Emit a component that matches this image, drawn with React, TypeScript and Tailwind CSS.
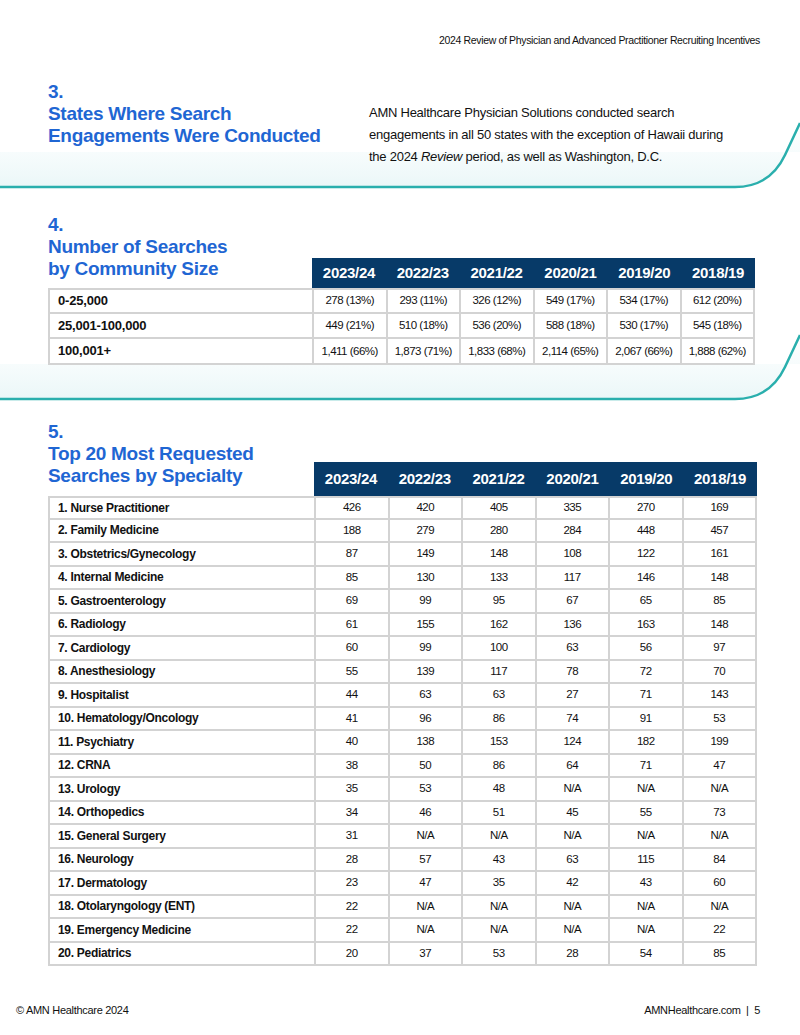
const years = ["2023/24", "2022/23", "2021/22", "2020/21", "2019/20", "2018/19"]

const communityRows = [
  { label: "0-25,000", values: ["278 (13%)", "293 (11%)", "326 (12%)", "549 (17%)", "534 (17%)", "612 (20%)"] },
  { label: "25,001-100,000", values: ["449 (21%)", "510 (18%)", "536 (20%)", "588 (18%)", "530 (17%)", "545 (18%)"] },
  { label: "100,001+", values: ["1,411 (66%)", "1,873 (71%)", "1,833 (68%)", "2,114 (65%)", "2,067 (66%)", "1,888 (62%)"] },
]

const specialtyRows = [
  { label: "1. Nurse Practitioner", values: ["426", "420", "405", "335", "270", "169"] },
  { label: "2. Family Medicine", values: ["188", "279", "280", "284", "448", "457"] },
  { label: "3. Obstetrics/Gynecology", values: ["87", "149", "148", "108", "122", "161"] },
  { label: "4. Internal Medicine", values: ["85", "130", "133", "117", "146", "148"] },
  { label: "5. Gastroenterology", values: ["69", "99", "95", "67", "65", "85"] },
  { label: "6. Radiology", values: ["61", "155", "162", "136", "163", "148"] },
  { label: "7. Cardiology", values: ["60", "99", "100", "63", "56", "97"] },
  { label: "8. Anesthesiology", values: ["55", "139", "117", "78", "72", "70"] },
  { label: "9. Hospitalist", values: ["44", "63", "63", "27", "71", "143"] },
  { label: "10. Hematology/Oncology", values: ["41", "96", "86", "74", "91", "53"] },
  { label: "11. Psychiatry", values: ["40", "138", "153", "124", "182", "199"] },
  { label: "12. CRNA", values: ["38", "50", "86", "64", "71", "47"] },
  { label: "13. Urology", values: ["35", "53", "48", "N/A", "N/A", "N/A"] },
  { label: "14. Orthopedics", values: ["34", "46", "51", "45", "55", "73"] },
  { label: "15. General Surgery", values: ["31", "N/A", "N/A", "N/A", "N/A", "N/A"] },
  { label: "16. Neurology", values: ["28", "57", "43", "63", "115", "84"] },
  { label: "17. Dermatology", values: ["23", "47", "35", "42", "43", "60"] },
  { label: "18. Otolaryngology (ENT)", values: ["22", "N/A", "N/A", "N/A", "N/A", "N/A"] },
  { label: "19. Emergency Medicine", values: ["22", "N/A", "N/A", "N/A", "N/A", "22"] },
  { label: "20. Pediatrics", values: ["20", "37", "53", "28", "54", "85"] },
]

// teal rule that sweeps up at the right edge
function Wave({ id, className }: { id: string; className: string }) {
  return (
    <svg className={className} width="800" height="110" viewBox="0 0 800 110" fill="none">
      <defs>
        <linearGradient id={id} x1="0" y1="0" x2="0" y2="1">
          <stop offset="0" stopColor="#eef9fa" stopOpacity="0" />
          <stop offset="1" stopColor="#e8f6f7" stopOpacity="0.9" />
        </linearGradient>
      </defs>
      <path d="M0 62 H800 V33 L785 65 Q770 97 735 97 H0 Z" fill={`url(#${id})`} />
      <path d="M0 97 H735 Q770 97 785 65 L800 33" stroke="#2aafad" strokeWidth="2.5" />
    </svg>
  )
}

function SectionTitle({ num, lines }: { num: string; lines: string[] }) {
  return (
    <h2 className="text-[19px] leading-[22px] font-bold tracking-[-0.3px] text-[#1f66d3]">
      <span className="block">{num}</span>
      {lines.map((l) => (
        <span key={l} className="block">{l}</span>
      ))}
    </h2>
  )
}

export default function App() {
  return (
    <div className="relative w-[800px] h-[1035px] overflow-hidden bg-white text-[#111] font-['Liberation_Sans',Arial,sans-serif]">
      <Wave id="g1" className="absolute left-0 top-[90px]" />
      <Wave id="g2" className="absolute left-0 top-[302px]" />

      <div className="relative flex flex-col h-full">
        <p className="pt-[33px] pr-[40px] text-right text-[10.5px] leading-[14px] tracking-[-0.35px]">
          2024 Review of Physician and Advanced Practitioner Recruiting Incentives
        </p>

        {/* 3 */}
        <section className="mt-[34px] flex items-start pl-[48px]">
          <div className="w-[321px]">
            <SectionTitle num="3." lines={["States Where Search", "Engagements Were Conducted"]} />
          </div>
          <p className="mt-[21px] w-[400px] text-[13px] leading-[22px] tracking-[-0.25px]">
            AMN Healthcare Physician Solutions conducted search
            <br />
            engagements in all 50 states with the exception of Hawaii during
            <br />
            the 2024 <i>Review</i> period, as well as Washington, D.C.
          </p>
        </section>

        {/* 4 */}
        <section className="mt-[46px] ml-[48px] w-[707px]">
          <div className="flex items-end">
            <div className="w-[264px] pb-[8px]">
              <SectionTitle num="4." lines={["Number of Searches", "by Community Size"]} />
            </div>
            <div className="flex-1 grid grid-cols-6 h-[30px] bg-[#073a68] text-white text-[15px] font-bold tracking-[-0.3px]">
              {years.map((y) => (
                <div key={y} className="flex items-center justify-center">{y}</div>
              ))}
            </div>
          </div>
          <div className="border-l-2 border-[#d3d3d3]">
            {communityRows.map((r, i) => (
              <div
                key={r.label}
                className={`grid grid-cols-[264px_repeat(6,1fr)] h-[25.7px] ${i === 0 ? "border-t-2 border-[#d3d3d3]" : ""}`}
              >
                <div className="flex items-center pl-[8px] text-[13px] font-bold tracking-[-0.2px] border-r-2 border-b-2 border-[#d3d3d3]">
                  {r.label}
                </div>
                {r.values.map((v, j) => (
                  <div key={j} className="flex items-center justify-center text-[11.5px] tracking-[-0.5px] border-r-2 border-b-2 border-[#d3d3d3]">
                    {v}
                  </div>
                ))}
              </div>
            ))}
          </div>
        </section>

        {/* 5 */}
        <section className="mt-[56px] ml-[48px] w-[709px]">
          <div className="flex items-end">
            <div className="w-[266px] pb-[9px]">
              <SectionTitle num="5." lines={["Top 20 Most Requested", "Searches by Specialty"]} />
            </div>
            <div className="flex-1 grid grid-cols-6 h-[34px] bg-[#073a68] text-white text-[15px] font-bold tracking-[-0.3px]">
              {years.map((y) => (
                <div key={y} className="flex items-center justify-center">{y}</div>
              ))}
            </div>
          </div>
          <div className="border-l-2 border-[#d3d3d3]">
            {specialtyRows.map((r, i) => (
              <div
                key={r.label}
                className={`grid grid-cols-[266px_repeat(6,1fr)] h-[23.5px] ${i === 0 ? "border-t-2 border-[#d3d3d3]" : ""}`}
              >
                <div className="flex items-center pl-[8px] text-[12px] font-bold tracking-[-0.3px] border-r-2 border-b-2 border-[#d3d3d3]">
                  {r.label}
                </div>
                {r.values.map((v, j) => (
                  <div key={j} className="flex items-center justify-center text-[11.5px] tracking-[-0.5px] border-r-2 border-b-2 border-[#d3d3d3]">
                    {v}
                  </div>
                ))}
              </div>
            ))}
          </div>
        </section>

        <footer className="mt-auto pb-[18px] pl-[16px] pr-[40px] flex justify-between text-[11px] leading-[14px] tracking-[-0.3px]">
          <span>© AMN Healthcare 2024</span>
          <span>AMNHealthcare.com &nbsp;|&nbsp; 5</span>
        </footer>
      </div>
    </div>
  )
}
